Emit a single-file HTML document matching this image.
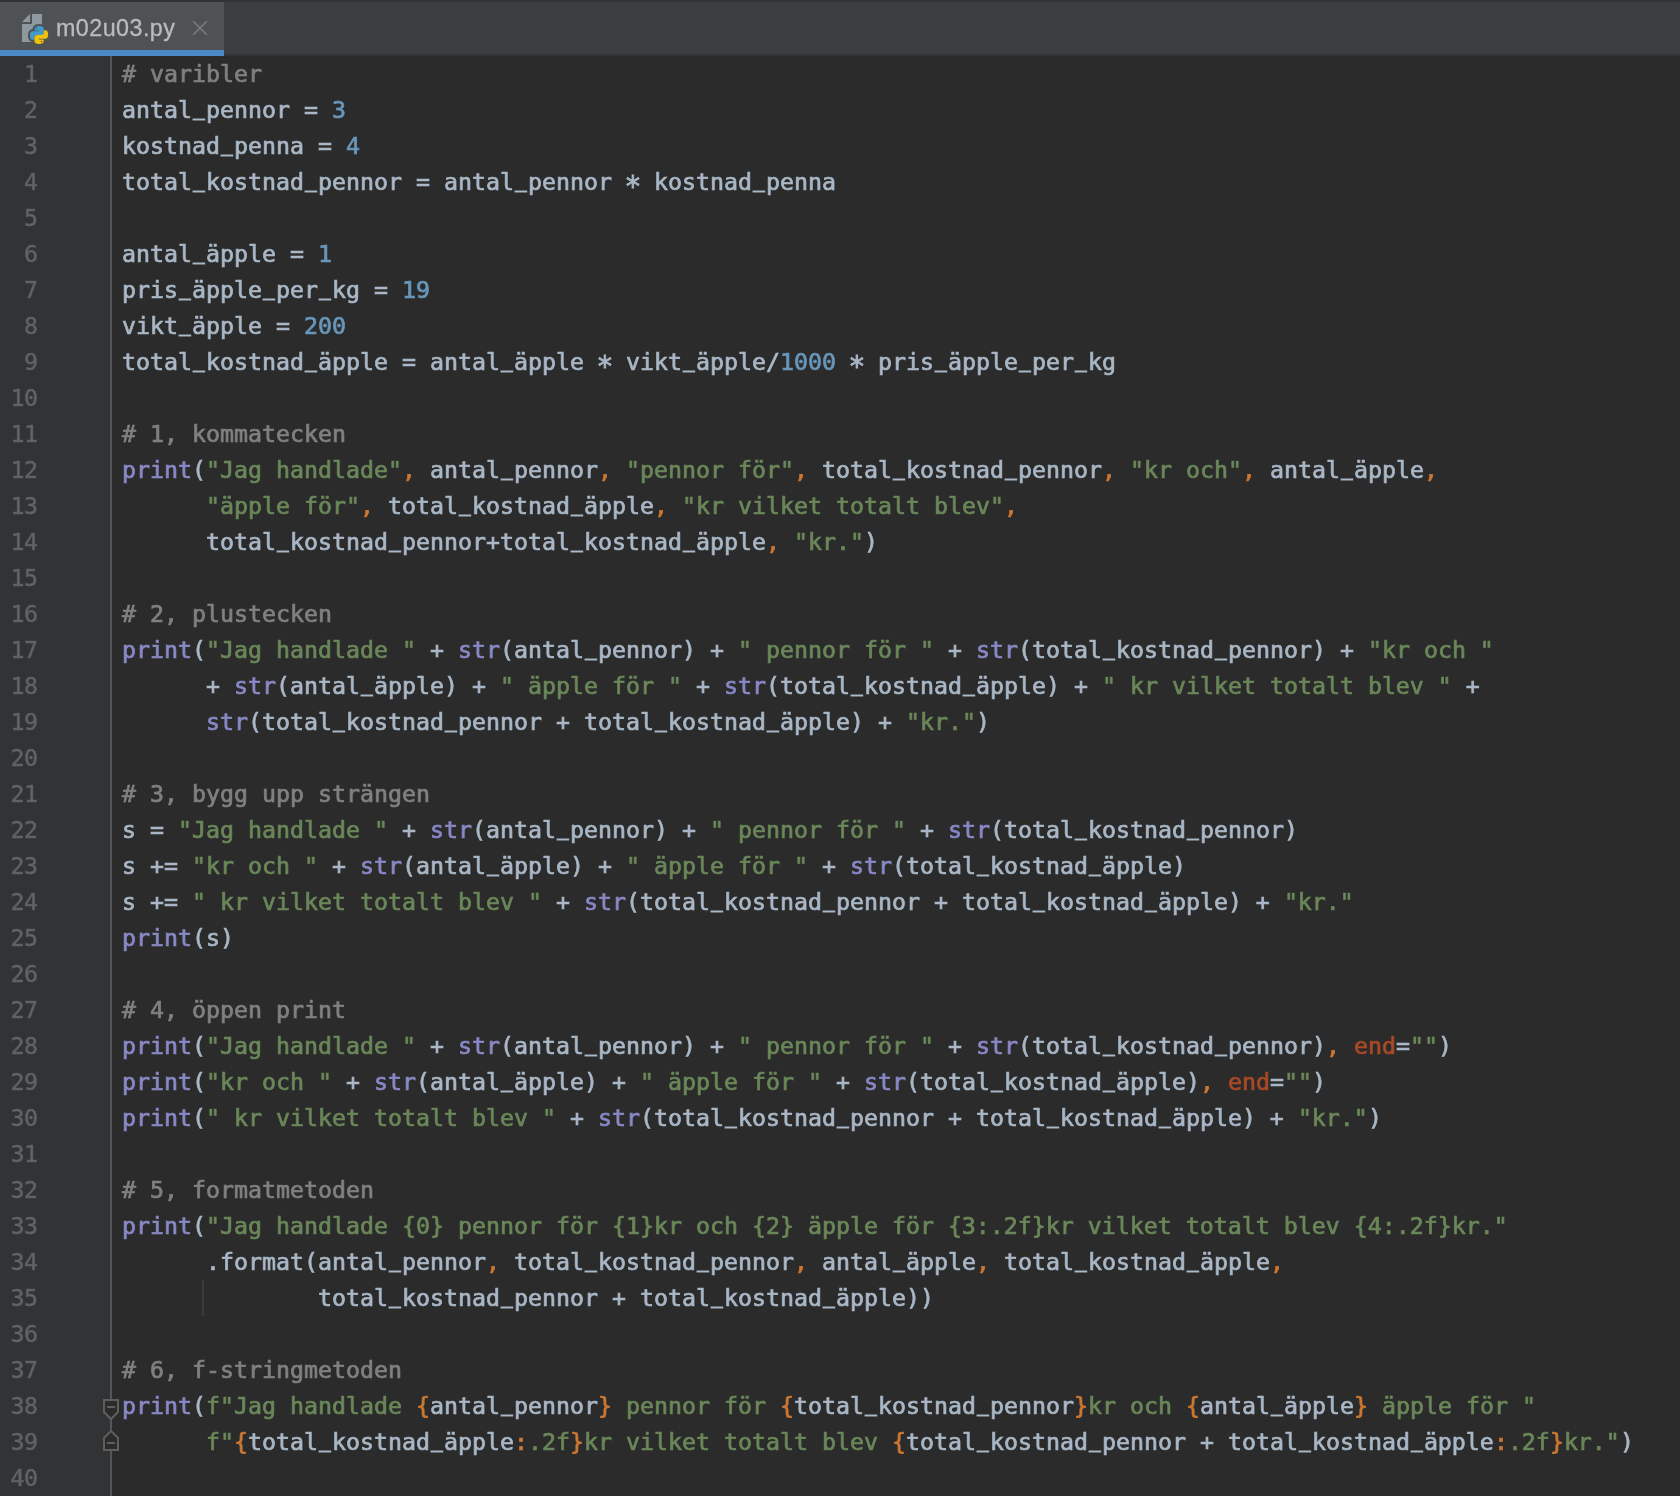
<!DOCTYPE html>
<html lang="sv">
<head>
<meta charset="utf-8">
<title>m02u03.py</title>
<style>
html,body{margin:0;padding:0;background:#2b2b2b;}
body{width:1680px;height:1496px;overflow:hidden;position:relative;font-family:"DejaVu Sans Mono","Liberation Mono",monospace;}
#topline{position:absolute;left:0;top:0;width:1680px;height:2px;background:#323232;}
#tabbar{position:absolute;left:0;top:2px;width:1680px;height:52px;background:#3c3f41;}
#tabbarline{position:absolute;left:0;top:54px;width:1680px;height:2px;background:#323232;}
#tab{position:absolute;left:0;top:2px;width:224px;height:48px;background:#4e5254;}
#tabul{position:absolute;left:0;top:50px;width:224px;height:6px;background:#4a88c7;}
#tabname{position:absolute;left:56px;top:13px;height:30px;line-height:30px;font-family:"Liberation Sans",sans-serif;font-size:23.3px;letter-spacing:0.45px;color:#bbbbbb;white-space:pre;will-change:transform;-webkit-text-stroke:0.3px;}
#gutter{position:absolute;left:0;top:56px;width:110px;height:1440px;background:#313335;}
#gsep{position:absolute;left:110px;top:56px;width:2px;height:1440px;background:#555555;}
#editor{position:absolute;left:0;top:56px;width:1680px;height:1440px;will-change:transform;}
.ln{position:relative;height:36px;line-height:36px;font-size:23.25px;white-space:pre;color:#a9b7c6;-webkit-text-stroke:0.7px;}
.st{display:inline-block;transform:translateY(4.2px) scale(1.2);}
.u{display:inline-block;transform:translateY(-4.2px) scaleX(.84);-webkit-text-stroke:1px;}
.no{position:absolute;left:0;top:0;width:37.6px;text-align:right;color:#606366;-webkit-text-stroke:0.45px;letter-spacing:-0.5px;}
.code{position:absolute;left:122px;top:0;}
.c{color:#808080}.n{color:#6897bb}.s{color:#6a8759}.k{color:#cc7832}.b{color:#8888c6}.a{color:#aa4926}
#guide{position:absolute;left:202px;top:1280px;width:2px;height:36px;background:#3b3b3b;}
svg{position:absolute;display:block;}
</style>
</head>
<body>
<div id="topline"></div>
<div id="tabbar"></div>
<div id="tabbarline"></div>
<div id="tab"></div>
<div id="tabul"></div>
<svg id="fileicon" style="left:20px;top:12px" width="32" height="34" viewBox="0 0 32 34">
  <g fill="#8d989f">
    <polygon points="2,10 10,10 10,2"/>
    <polygon points="12,2 22,2 22,30 2,30 2,12 12,12"/>
  </g>
  <g transform="translate(10,14)">
    <g fill="none" stroke="#4e5254" stroke-width="4.2" stroke-linejoin="round">
      <path d="M9.2 0C6.3 0 4.6 1 4.6 2.8V4.4H9.2V5.2H2.8C1 5.2 0 6.8 0 9.4s1 4.3 2.8 4.3H4.4V11.6c0-1.6 1.2-2.5 2.8-2.5H11c1.6 0 2.75-1.3 2.75-2.9V2.8C13.75 1 12 0 9.2 0Z"/>
      <path transform="rotate(180 9.1 9)" d="M9.2 0C6.3 0 4.6 1 4.6 2.8V4.4H9.2V5.2H2.8C1 5.2 0 6.8 0 9.4s1 4.3 2.8 4.3H4.4V11.6c0-1.6 1.2-2.5 2.8-2.5H11c1.6 0 2.75-1.3 2.75-2.9V2.8C13.75 1 12 0 9.2 0Z"/>
    </g>
    <path fill="#429bcb" d="M9.2 0C6.3 0 4.6 1 4.6 2.8V4.4H9.2V5.2H2.8C1 5.2 0 6.8 0 9.4s1 4.3 2.8 4.3H4.4V11.6c0-1.6 1.2-2.5 2.8-2.5H11c1.6 0 2.75-1.3 2.75-2.9V2.8C13.75 1 12 0 9.2 0Z"/>
    <path fill="#f0c10a" transform="rotate(180 9.1 9)" d="M9.2 0C6.3 0 4.6 1 4.6 2.8V4.4H9.2V5.2H2.8C1 5.2 0 6.8 0 9.4s1 4.3 2.8 4.3H4.4V11.6c0-1.6 1.2-2.5 2.8-2.5H11c1.6 0 2.75-1.3 2.75-2.9V2.8C13.75 1 12 0 9.2 0Z"/>
    <circle cx="6.4" cy="1.9" r=".8" fill="#2f5f80"/>
    <circle cx="11.5" cy="15.6" r=".8" fill="#7a6310"/>
  </g>
</svg>
<div id="tabname">m02u03.py</div>
<svg id="closex" style="left:190px;top:18px" width="20" height="20" viewBox="0 0 20 20"><path d="M3.2 3.2L16.8 16.8M16.8 3.2L3.2 16.8" stroke="#74787b" stroke-width="1.7" fill="none"/></svg>
<div id="gutter"></div>
<div id="gsep"></div>
<div id="guide"></div>
<div id="editor">
<div class="ln"><span class="no">1</span><span class="code"><span class="c"># varibler</span></span></div>
<div class="ln"><span class="no">2</span><span class="code">antal<span class="u">_</span>pennor = <span class="n">3</span></span></div>
<div class="ln"><span class="no">3</span><span class="code">kostnad<span class="u">_</span>penna = <span class="n">4</span></span></div>
<div class="ln"><span class="no">4</span><span class="code">total<span class="u">_</span>kostnad<span class="u">_</span>pennor = antal<span class="u">_</span>pennor <span class="st">*</span> kostnad<span class="u">_</span>penna</span></div>
<div class="ln"><span class="no">5</span><span class="code"></span></div>
<div class="ln"><span class="no">6</span><span class="code">antal<span class="u">_</span>äpple = <span class="n">1</span></span></div>
<div class="ln"><span class="no">7</span><span class="code">pris<span class="u">_</span>äpple<span class="u">_</span>per<span class="u">_</span>kg = <span class="n">19</span></span></div>
<div class="ln"><span class="no">8</span><span class="code">vikt<span class="u">_</span>äpple = <span class="n">200</span></span></div>
<div class="ln"><span class="no">9</span><span class="code">total<span class="u">_</span>kostnad<span class="u">_</span>äpple = antal<span class="u">_</span>äpple <span class="st">*</span> vikt<span class="u">_</span>äpple/<span class="n">1000</span> <span class="st">*</span> pris<span class="u">_</span>äpple<span class="u">_</span>per<span class="u">_</span>kg</span></div>
<div class="ln"><span class="no">10</span><span class="code"></span></div>
<div class="ln"><span class="no">11</span><span class="code"><span class="c"># 1, kommatecken</span></span></div>
<div class="ln"><span class="no">12</span><span class="code"><span class="b">print</span>(<span class="s">"Jag handlade"</span><span class="k">,</span> antal<span class="u">_</span>pennor<span class="k">,</span> <span class="s">"pennor för"</span><span class="k">,</span> total<span class="u">_</span>kostnad<span class="u">_</span>pennor<span class="k">,</span> <span class="s">"kr och"</span><span class="k">,</span> antal<span class="u">_</span>äpple<span class="k">,</span></span></div>
<div class="ln"><span class="no">13</span><span class="code">      <span class="s">"äpple för"</span><span class="k">,</span> total<span class="u">_</span>kostnad<span class="u">_</span>äpple<span class="k">,</span> <span class="s">"kr vilket totalt blev"</span><span class="k">,</span></span></div>
<div class="ln"><span class="no">14</span><span class="code">      total<span class="u">_</span>kostnad<span class="u">_</span>pennor+total<span class="u">_</span>kostnad<span class="u">_</span>äpple<span class="k">,</span> <span class="s">"kr."</span>)</span></div>
<div class="ln"><span class="no">15</span><span class="code"></span></div>
<div class="ln"><span class="no">16</span><span class="code"><span class="c"># 2, plustecken</span></span></div>
<div class="ln"><span class="no">17</span><span class="code"><span class="b">print</span>(<span class="s">"Jag handlade "</span> + <span class="b">str</span>(antal<span class="u">_</span>pennor) + <span class="s">" pennor för "</span> + <span class="b">str</span>(total<span class="u">_</span>kostnad<span class="u">_</span>pennor) + <span class="s">"kr och "</span></span></div>
<div class="ln"><span class="no">18</span><span class="code">      + <span class="b">str</span>(antal<span class="u">_</span>äpple) + <span class="s">" äpple för "</span> + <span class="b">str</span>(total<span class="u">_</span>kostnad<span class="u">_</span>äpple) + <span class="s">" kr vilket totalt blev "</span> +</span></div>
<div class="ln"><span class="no">19</span><span class="code">      <span class="b">str</span>(total<span class="u">_</span>kostnad<span class="u">_</span>pennor + total<span class="u">_</span>kostnad<span class="u">_</span>äpple) + <span class="s">"kr."</span>)</span></div>
<div class="ln"><span class="no">20</span><span class="code"></span></div>
<div class="ln"><span class="no">21</span><span class="code"><span class="c"># 3, bygg upp strängen</span></span></div>
<div class="ln"><span class="no">22</span><span class="code">s = <span class="s">"Jag handlade "</span> + <span class="b">str</span>(antal<span class="u">_</span>pennor) + <span class="s">" pennor för "</span> + <span class="b">str</span>(total<span class="u">_</span>kostnad<span class="u">_</span>pennor)</span></div>
<div class="ln"><span class="no">23</span><span class="code">s += <span class="s">"kr och "</span> + <span class="b">str</span>(antal<span class="u">_</span>äpple) + <span class="s">" äpple för "</span> + <span class="b">str</span>(total<span class="u">_</span>kostnad<span class="u">_</span>äpple)</span></div>
<div class="ln"><span class="no">24</span><span class="code">s += <span class="s">" kr vilket totalt blev "</span> + <span class="b">str</span>(total<span class="u">_</span>kostnad<span class="u">_</span>pennor + total<span class="u">_</span>kostnad<span class="u">_</span>äpple) + <span class="s">"kr."</span></span></div>
<div class="ln"><span class="no">25</span><span class="code"><span class="b">print</span>(s)</span></div>
<div class="ln"><span class="no">26</span><span class="code"></span></div>
<div class="ln"><span class="no">27</span><span class="code"><span class="c"># 4, öppen print</span></span></div>
<div class="ln"><span class="no">28</span><span class="code"><span class="b">print</span>(<span class="s">"Jag handlade "</span> + <span class="b">str</span>(antal<span class="u">_</span>pennor) + <span class="s">" pennor för "</span> + <span class="b">str</span>(total<span class="u">_</span>kostnad<span class="u">_</span>pennor)<span class="k">,</span> <span class="a">end</span>=<span class="s">""</span>)</span></div>
<div class="ln"><span class="no">29</span><span class="code"><span class="b">print</span>(<span class="s">"kr och "</span> + <span class="b">str</span>(antal<span class="u">_</span>äpple) + <span class="s">" äpple för "</span> + <span class="b">str</span>(total<span class="u">_</span>kostnad<span class="u">_</span>äpple)<span class="k">,</span> <span class="a">end</span>=<span class="s">""</span>)</span></div>
<div class="ln"><span class="no">30</span><span class="code"><span class="b">print</span>(<span class="s">" kr vilket totalt blev "</span> + <span class="b">str</span>(total<span class="u">_</span>kostnad<span class="u">_</span>pennor + total<span class="u">_</span>kostnad<span class="u">_</span>äpple) + <span class="s">"kr."</span>)</span></div>
<div class="ln"><span class="no">31</span><span class="code"></span></div>
<div class="ln"><span class="no">32</span><span class="code"><span class="c"># 5, formatmetoden</span></span></div>
<div class="ln"><span class="no">33</span><span class="code"><span class="b">print</span>(<span class="s">"Jag handlade {0} pennor för {1}kr och {2} äpple för {3:.2f}kr vilket totalt blev {4:.2f}kr."</span></span></div>
<div class="ln"><span class="no">34</span><span class="code">      .format(antal<span class="u">_</span>pennor<span class="k">,</span> total<span class="u">_</span>kostnad<span class="u">_</span>pennor<span class="k">,</span> antal<span class="u">_</span>äpple<span class="k">,</span> total<span class="u">_</span>kostnad<span class="u">_</span>äpple<span class="k">,</span></span></div>
<div class="ln"><span class="no">35</span><span class="code">              total<span class="u">_</span>kostnad<span class="u">_</span>pennor + total<span class="u">_</span>kostnad<span class="u">_</span>äpple))</span></div>
<div class="ln"><span class="no">36</span><span class="code"></span></div>
<div class="ln"><span class="no">37</span><span class="code"><span class="c"># 6, f-stringmetoden</span></span></div>
<div class="ln"><span class="no">38</span><span class="code"><span class="b">print</span>(<span class="s">f"Jag handlade </span><span class="k">{</span>antal<span class="u">_</span>pennor<span class="k">}</span><span class="s"> pennor för </span><span class="k">{</span>total<span class="u">_</span>kostnad<span class="u">_</span>pennor<span class="k">}</span><span class="s">kr och </span><span class="k">{</span>antal<span class="u">_</span>äpple<span class="k">}</span><span class="s"> äpple för "</span></span></div>
<div class="ln"><span class="no">39</span><span class="code">      <span class="s">f"</span><span class="k">{</span>total<span class="u">_</span>kostnad<span class="u">_</span>äpple<span class="k">:</span><span class="s">.2f</span><span class="k">}</span><span class="s">kr vilket totalt blev </span><span class="k">{</span>total<span class="u">_</span>kostnad<span class="u">_</span>pennor + total<span class="u">_</span>kostnad<span class="u">_</span>äpple<span class="k">:</span><span class="s">.2f</span><span class="k">}</span><span class="s">kr."</span>)</span></div>
<div class="ln"><span class="no">40</span><span class="code"></span></div>
</div>
<svg id="folds" style="left:100px;top:1390px" width="24" height="70" viewBox="0 0 24 70">
  <g fill="#2b2b2b" stroke="#5e5e5e" stroke-width="2" stroke-linejoin="miter">
    <path d="M4 10H18V22L11 29L4 22Z"/>
    <path d="M11 41L18 48V60H4V48Z"/>
  </g>
  <path d="M7 17H15M7 53H15" stroke="#5e5e5e" stroke-width="2" fill="none"/>
</svg>
</body>
</html>
